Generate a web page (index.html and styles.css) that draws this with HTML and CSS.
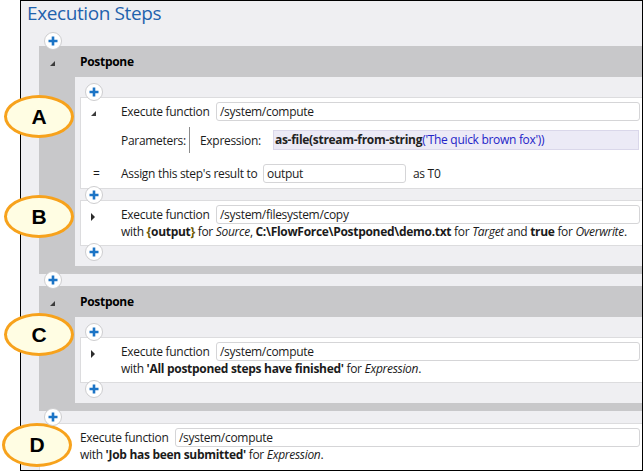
FILE: index.html
```html
<!DOCTYPE html>
<html lang="en">
  <head>
    <meta charset="UTF-8" />
    <meta name="viewport" content="width=device-width, initial-scale=1.0" />
    <title>Execution Steps</title>
    <link rel="stylesheet" href="styles.css">
  </head>
  <body>
    <div class="frame">
      <h1 class="title">Execution Steps</h1>
      <div class="adder outer first">
        <svg class="plus" viewBox="0 0 18 18"><circle cx="9" cy="9" r="8.5" /><path d="M9 4.5v9M4.5 9h9" /></svg>
      </div>

      <div class="block">
        <div class="block-head">
          <span class="toggle"><svg class="tri-open" viewBox="0 0 5 5"><path d="M5 0V5H0Z" /></svg></span>
          <span>Postpone</span>
        </div>
        <div class="block-body">
          <div class="adder">
            <svg class="plus" viewBox="0 0 18 18"><circle cx="9" cy="9" r="8.5" /><path d="M9 4.5v9M4.5 9h9" /></svg>
          </div>
          <div class="step">
            <div class="row">
              <span class="gutter"><svg class="tri-open" viewBox="0 0 5 5"><path d="M5 0V5H0Z" /></svg></span>
              <span class="label">Execute function</span>
              <span class="field">/system/compute</span>
            </div>
            <div class="row params">
              <span class="gutter"></span>
              <span class="param-label">Parameters:</span>
              <span class="sep"></span>
              <span class="param-name">Expression:</span>
              <span class="expr"><b>as-file(stream-from-string</b><span class="str">('The quick brown fox'))</span></span>
            </div>
            <div class="row assign">
              <span class="gutter eq">=</span>
              <span class="assign-label">Assign this step's result to</span>
              <span class="field short">output</span>
              <span class="as">as T0</span>
            </div>
          </div>
          <div class="adder">
            <svg class="plus" viewBox="0 0 18 18"><circle cx="9" cy="9" r="8.5" /><path d="M9 4.5v9M4.5 9h9" /></svg>
          </div>
          <div class="step">
            <div class="row">
              <span class="gutter"><svg class="tri-closed" viewBox="0 0 4 8"><path d="M0 0L4 4L0 8Z" /></svg></span>
              <span class="label">Execute function</span>
              <span class="field">/system/filesystem/copy</span>
            </div>
            <div class="line">with <span class="brace">{</span><b>output</b><span class="brace">}</span> for <i>Source</i>, <b>C:\FlowForce\Postponed\demo.txt</b> for <i>Target</i> and <b>true</b> for <i>Overwrite</i>.</div>
          </div>
          <div class="adder">
            <svg class="plus" viewBox="0 0 18 18"><circle cx="9" cy="9" r="8.5" /><path d="M9 4.5v9M4.5 9h9" /></svg>
          </div>
        </div>
      </div>

      <div class="adder outer">
        <svg class="plus" viewBox="0 0 18 18"><circle cx="9" cy="9" r="8.5" /><path d="M9 4.5v9M4.5 9h9" /></svg>
      </div>

      <div class="block">
        <div class="block-head">
          <span class="toggle"><svg class="tri-open" viewBox="0 0 5 5"><path d="M5 0V5H0Z" /></svg></span>
          <span>Postpone</span>
        </div>
        <div class="block-body">
          <div class="adder">
            <svg class="plus" viewBox="0 0 18 18"><circle cx="9" cy="9" r="8.5" /><path d="M9 4.5v9M4.5 9h9" /></svg>
          </div>
          <div class="step">
            <div class="row">
              <span class="gutter"><svg class="tri-closed" viewBox="0 0 4 8"><path d="M0 0L4 4L0 8Z" /></svg></span>
              <span class="label">Execute function</span>
              <span class="field">/system/compute</span>
            </div>
            <div class="line">with <b>'All postponed steps have finished'</b> for <i>Expression</i>.</div>
          </div>
          <div class="adder">
            <svg class="plus" viewBox="0 0 18 18"><circle cx="9" cy="9" r="8.5" /><path d="M9 4.5v9M4.5 9h9" /></svg>
          </div>
        </div>
      </div>

      <div class="adder outer">
        <svg class="plus" viewBox="0 0 18 18"><circle cx="9" cy="9" r="8.5" /><path d="M9 4.5v9M4.5 9h9" /></svg>
      </div>

      <div class="step top">
        <div class="row">
          <span class="gutter"></span>
          <span class="label">Execute function</span>
          <span class="field">/system/compute</span>
        </div>
        <div class="line">with <b>'Job has been submitted'</b> for <i>Expression</i>.</div>
      </div>
    </div>

    <div class="callout callout-a">A</div>
    <div class="callout callout-b">B</div>
    <div class="callout callout-c">C</div>
    <div class="callout callout-d">D</div>
  </body>
</html>
```

FILE: styles.css
```css
body {
  margin: 0;
  position: relative;
  width: 644px;
  height: 472px;
  overflow: hidden;
  background: #fff;
  font-family: "Open Sans", "Noto Sans", sans-serif;
  font-size: 12px;
  letter-spacing: -0.3px;
  color: #1b1b1b;
}
.frame {
  margin-left: 20px;
  width: 623px;
  height: 471px;
  box-sizing: border-box;
  border: 1px solid #000;
  background: #efeff2;
  overflow: hidden;
}
.title {
  margin: 0;
  height: 35px;
  padding-left: 6px;
  font-size: 19px;
  font-weight: normal;
  line-height: 24px;
  letter-spacing: -0.4px;
  color: #1f62ad;
}

/* plus buttons between steps */
.adder {
  position: relative;
  z-index: 1;
  height: 11px;
  display: flex;
  align-items: center;
  padding-left: 5px;
}
.adder.outer {
  height: 12px;
  padding-left: 23px;
}
.adder.first {
  height: 10px;
}
.plus {
  width: 18px;
  height: 18px;
  flex: none;
}
.plus circle {
  fill: #fff;
  stroke: #cdcdcf;
}
.plus path {
  stroke: #1b74c6;
  stroke-width: 2.6;
}

.tri-open {
  width: 5px;
  height: 5px;
  fill: #3c3c3c;
}
.tri-closed {
  width: 4px;
  height: 8px;
  fill: #2c2c2c;
}

/* postpone blocks */
.block {
  margin-left: 18px;
  background: #c8c8ca;
  padding-bottom: 8px;
}
.block-head {
  height: 31px;
  display: flex;
  align-items: center;
  font-weight: bold;
  color: #000;
}
.toggle {
  width: 30px;
  padding-left: 11px;
  display: flex;
  padding-top: 4px;
}
.block-body {
  margin-left: 36px;
  background: #efeff2;
  padding: 9px 0 9px 5px;
}

/* steps */
.step {
  background: #fff;
  border: 1px solid #dcdcde;
  border-right: 0;
  padding: 4px 0 5px;
}
.step.top {
  margin-left: 18px;
  padding-bottom: 8px;
}
.row {
  display: flex;
  align-items: center;
  height: 19px;
}
.gutter {
  width: 30px;
  padding-left: 10px;
  flex: none;
  display: flex;
  align-items: center;
}
.row .gutter svg {
  margin-top: 4px;
}
.label {
  width: 95px;
  flex: none;
}
.field {
  flex: 1;
  height: 19px;
  box-sizing: border-box;
  border: 1px solid #d5d5d7;
  border-radius: 3px;
  background: #fff;
  padding: 0 3px;
  line-height: 17px;
  margin-right: 2px;
}
.field.short {
  flex: none;
  width: 143px;
  margin-right: 0;
}
.params {
  height: 26px;
  margin-top: 6px;
}
.param-label {
  width: 68px;
  flex: none;
}
.sep {
  width: 1px;
  align-self: stretch;
  background: #8c8c8c;
  margin-right: 10px;
}
.param-name {
  width: 73px;
  flex: none;
}
.expr {
  flex: 1;
  height: 20px;
  box-sizing: border-box;
  border: 1px solid #dad7ea;
  background: #eceaf6;
  line-height: 18px;
  padding-left: 1px;
  margin-right: 3px;
  color: #222;
}
.expr .str {
  color: #2424c8;
}
.assign {
  margin-top: 11px;
}
.eq {
  padding-left: 12px;
  width: 28px;
}
.assign-label {
  width: 142px;
  flex: none;
}
.as {
  margin-left: 7px;
}
.line {
  padding-left: 40px;
  line-height: 16px;
}
.brace {
  color: #6b5800;
  font-weight: bold;
}

/* annotation bubbles */
.callout {
  position: absolute;
  left: 4px;
  width: 70px;
  height: 43px;
  box-sizing: border-box;
  border: 3px solid #f7a21c;
  border-radius: 50%;
  background: #fffde3;
  display: flex;
  align-items: center;
  justify-content: center;
  font-family: "Liberation Sans", Arial, sans-serif;
  font-size: 21px;
  font-weight: bold;
  letter-spacing: 0;
  color: #000;
}
.callout-a {
  top: 95px;
}
.callout-b {
  top: 195px;
}
.callout-c {
  top: 313px;
}
.callout-d {
  left: 2px;
  top: 423px;
  height: 44px;
}
```
